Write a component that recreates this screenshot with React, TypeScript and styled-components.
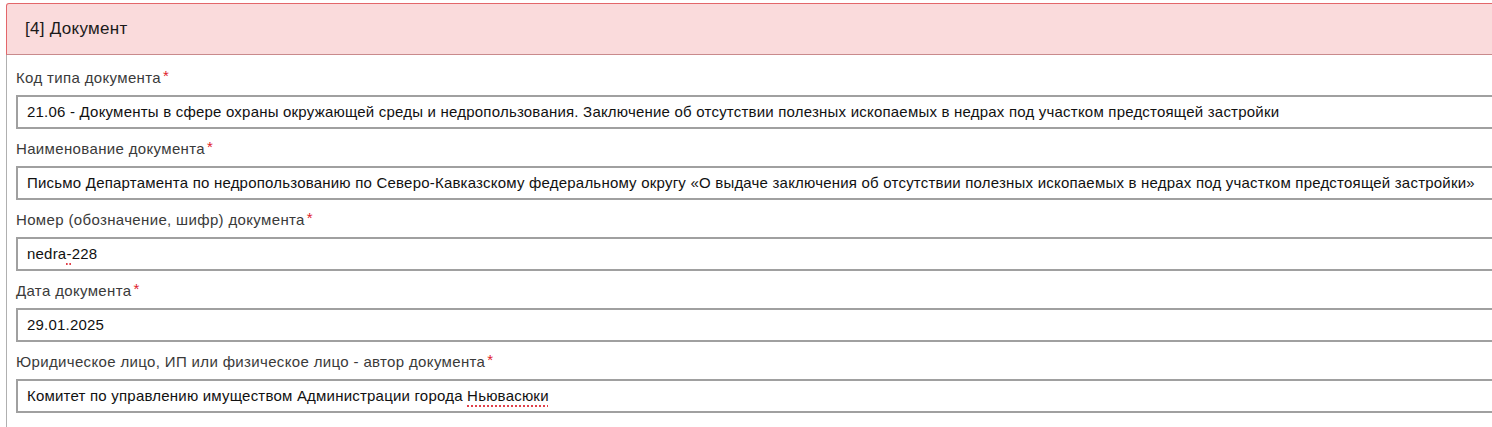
import styled, { createGlobalStyle } from "styled-components";

const GlobalStyle = createGlobalStyle`
  html, body {
    margin: 0;
    padding: 0;
    background: #ffffff;
    overflow: hidden;
  }
  body {
    font-family: "Liberation Sans", Arial, sans-serif;
  }
`;

interface FieldProps {
  label: string;
  children: React.ReactNode;
}

function FormField({ label, children }: FieldProps) {
  return (
    <FieldWrap>
      <Label>
        {label}
        <Req>*</Req>
      </Label>
      <Value>{children}</Value>
    </FieldWrap>
  );
}

export default function App() {
  return (
    <Page>
      <GlobalStyle />
      <Panel>
        <Header>[4] Документ</Header>
        <Body>
          <FormField label="Код типа документа">
            21.06 - Документы в сфере охраны окружающей среды и недропользования. Заключение об
            отсутствии полезных ископаемых в недрах под участком предстоящей застройки
          </FormField>
          <FormField label="Наименование документа">
            Письмо Департамента по недропользованию по Северо-Кавказскому федеральному округу «О
            выдаче заключения об отсутствии полезных ископаемых в недрах под участком предстоящей
            застройки»
          </FormField>
          <FormField label="Номер (обозначение, шифр) документа">
            nedra<Spell>-</Spell>228
          </FormField>
          <FormField label="Дата документа">29.01.2025</FormField>
          <FormField label="Юридическое лицо, ИП или физическое лицо - автор документа">
            Комитет по управлению имуществом Администрации города <Spell>Ньювасюки</Spell>
          </FormField>
        </Body>
      </Panel>
    </Page>
  );
}

const Page = styled.div`
  padding: 3px 0 0 6px;
  width: 1600px;
`;

const Panel = styled.div`
  width: 1560px;
`;

const Header = styled.div`
  height: 52px;
  box-sizing: border-box;
  padding: 0 18px;
  display: flex;
  align-items: center;
  background: #fadbdc;
  border: 1px solid #e3666a;
  border-bottom-color: #c98a8c;
  border-radius: 3px 3px 0 0;
  font-size: 17px;
  letter-spacing: 0.3px;
  color: #1a1a1a;
`;

const Body = styled.div`
  border-left: 1px solid #b0b0b0;
  padding: 13px 0 20px 9px;
`;

const FieldWrap = styled.div`
  margin-bottom: 10px;
`;

const Label = styled.div`
  font-size: 15px;
  letter-spacing: 0.35px;
  line-height: 20px;
  color: #3a3a3a;
  margin-bottom: 7px;
`;

const Req = styled.span`
  color: #e0202a;
  margin-left: 2px;
  font-size: 15px;
  position: relative;
  top: -2px;
`;

const Value = styled.div`
  box-sizing: border-box;
  height: 34px;
  border: 2px solid #a0a0a0;
  padding: 0 9px;
  line-height: 30px;
  font-size: 15px;
  letter-spacing: 0.21px;
  color: #111;
  white-space: nowrap;
  overflow: hidden;
`;

const Spell = styled.span`
  text-decoration: underline dotted #e0404a;
  text-decoration-thickness: 2px;
  text-underline-offset: 4px;
`;
